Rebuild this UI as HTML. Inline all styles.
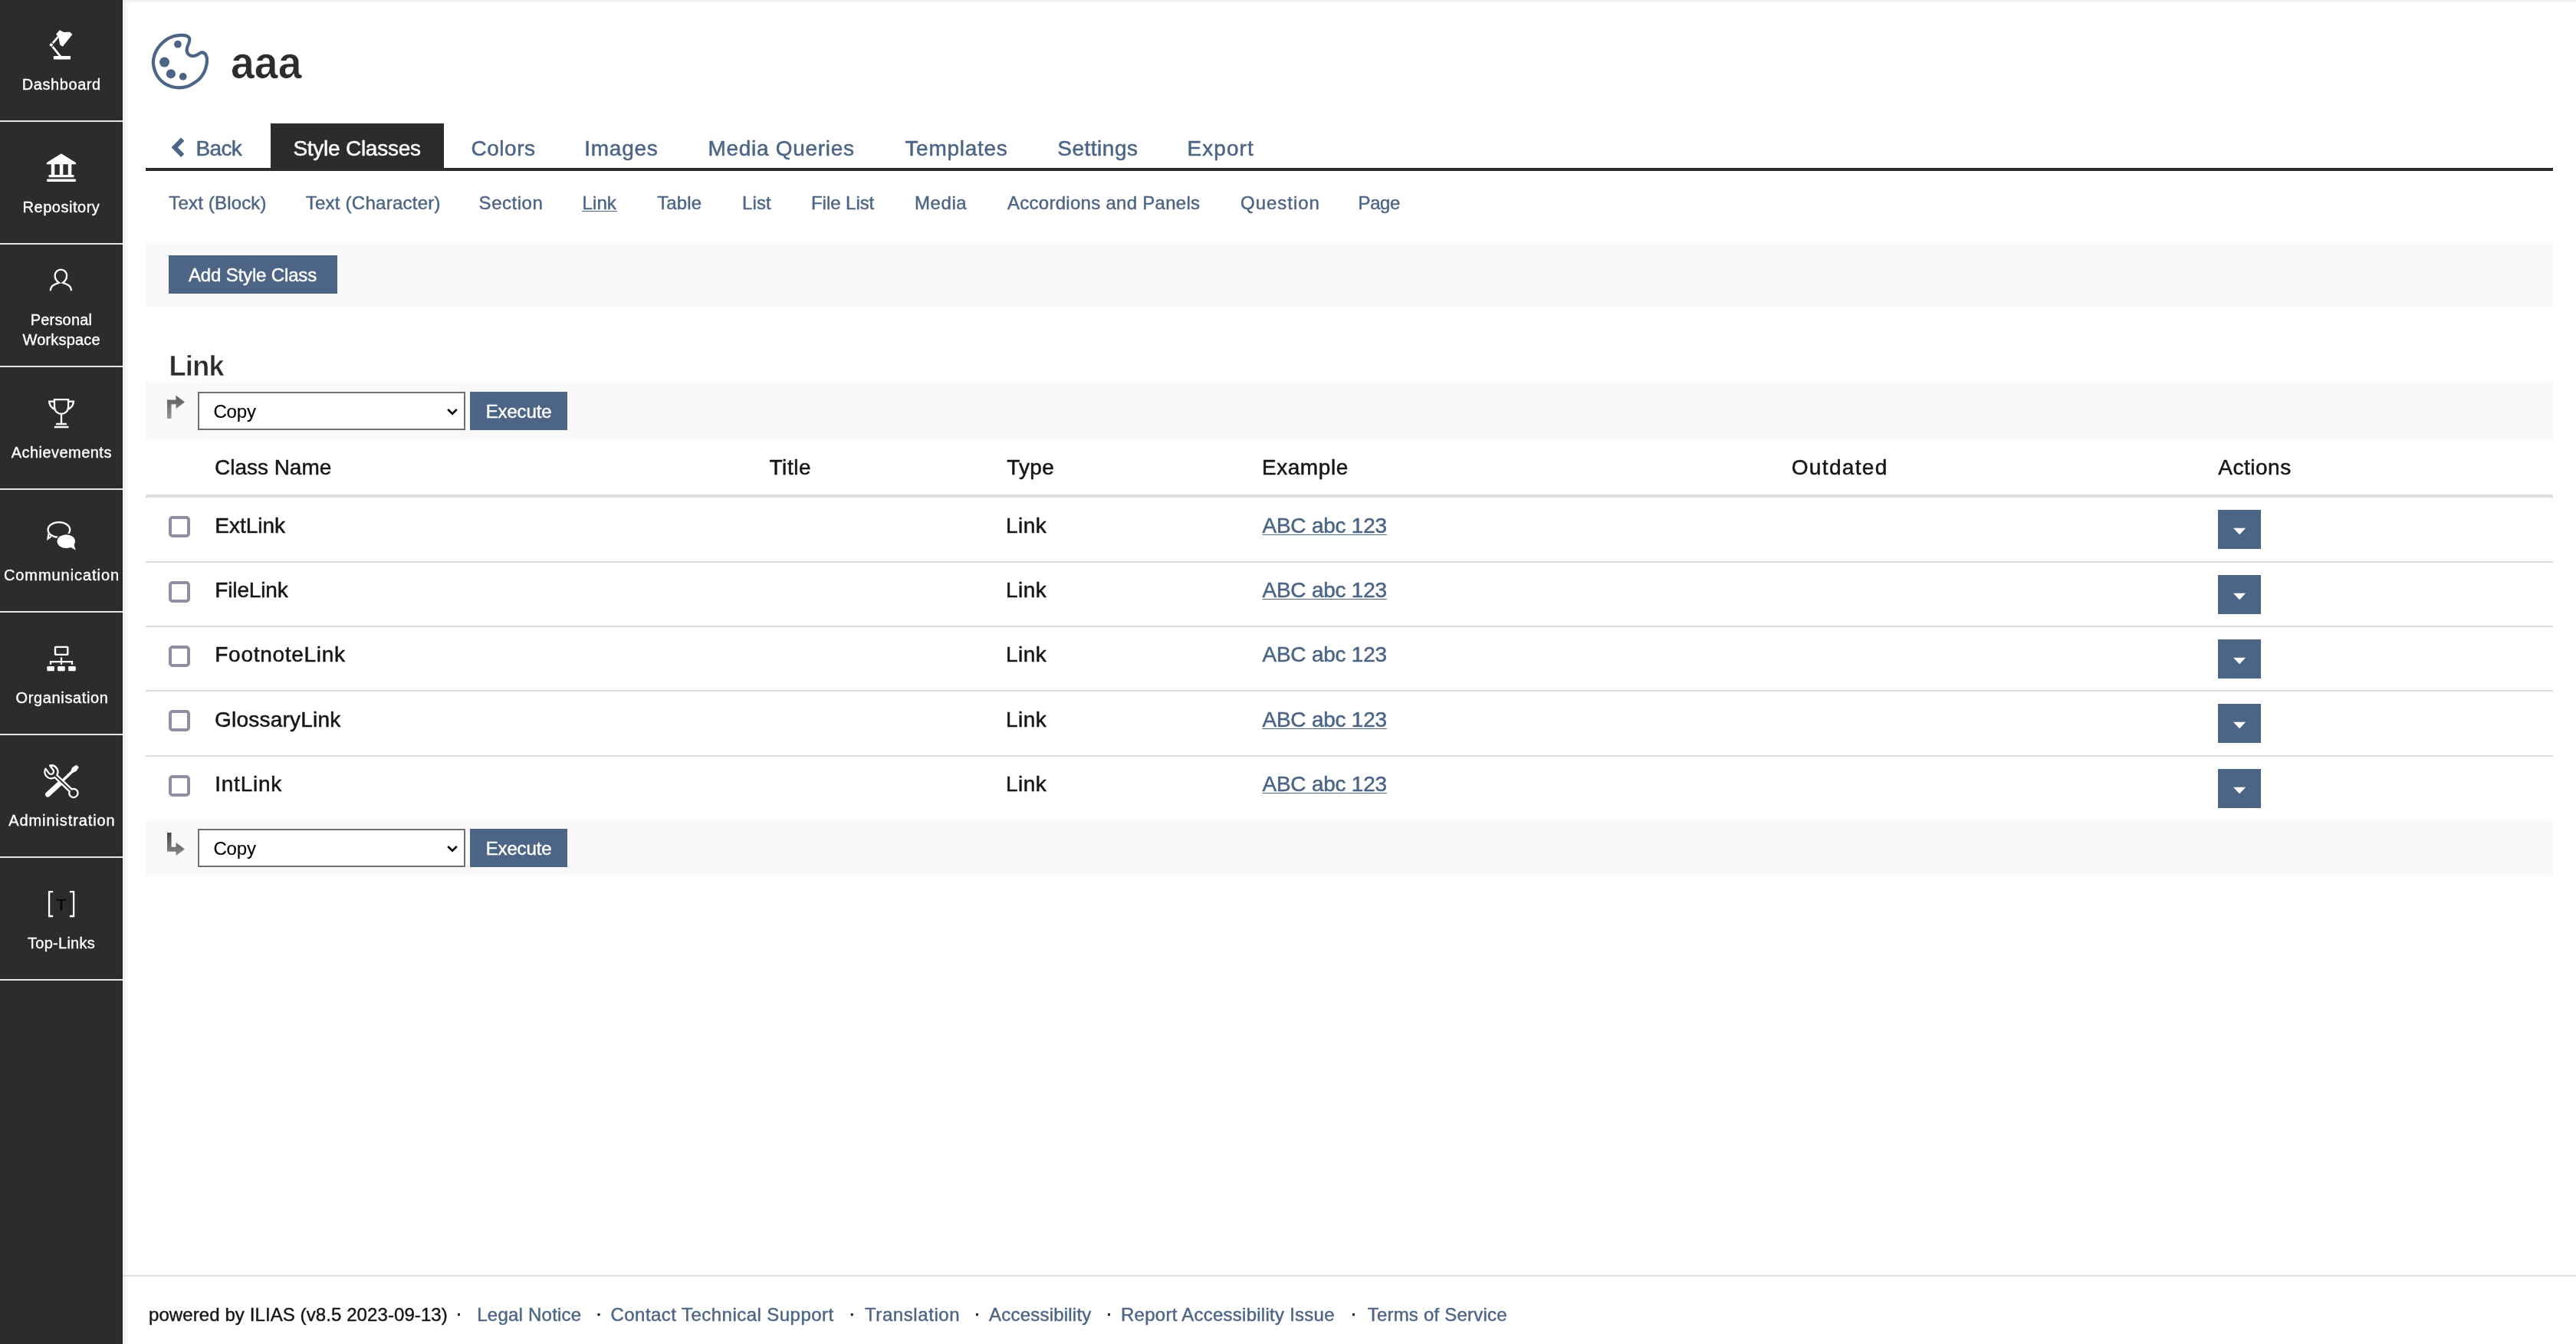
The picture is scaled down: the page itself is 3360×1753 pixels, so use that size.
<!DOCTYPE html>
<html lang="en"><head><meta charset="utf-8"><title>aaa - Style Classes</title>
<style>
html,body{margin:0;padding:0;}
body{width:3360px;height:1753px;position:relative;overflow:hidden;background:#fff;font-family:"Liberation Sans",sans-serif;}
.a{position:absolute;}
.t{margin:0;padding:0;font-weight:400;position:absolute;white-space:nowrap;line-height:1;font-family:"Liberation Sans",sans-serif;}
.ul{text-decoration:underline;text-decoration-thickness:1.3px;text-underline-offset:1.9px;}
#side{left:0;top:0;width:160px;height:1753px;background:#2c2c2c;}
.sep{left:0;width:160px;height:2px;background:#e6e6e6;}
.btn{background:#4c6586;}
.bar{left:190px;width:3140px;background:#f9f9f9;}
.hl{left:190px;width:3140px;background:#ddd;}
.cb{left:220px;width:20px;height:20px;border:4px solid #8f8fa1;border-radius:5px;background:#fff;}
.sel{left:258px;width:345px;height:46px;border:2px solid #6f6f6f;background:#fff;}
.act{left:2893px;width:56px;height:51px;background:#4c6586;}
#texts{position:absolute;left:0;top:0;width:3360px;height:1753px;will-change:transform;}

</style></head>
<body>
<div class="a" id="side"></div>
<div class="a" style="left:158px;top:0;width:2px;height:1753px;background:linear-gradient(90deg,#2a2a2a,#1e1e1e)"></div>
<div class="a" style="left:161px;top:0;width:7px;height:1753px;background:linear-gradient(90deg,#eee,#fff)"></div>
<div class="a" style="left:160px;top:0;width:3200px;height:5px;background:linear-gradient(180deg,#eee,rgba(255,255,255,0))"></div>
<div class="a sep" style="top:157px"></div>
<div class="a sep" style="top:317px"></div>
<div class="a sep" style="top:477px"></div>
<div class="a sep" style="top:637px"></div>
<div class="a sep" style="top:797px"></div>
<div class="a sep" style="top:957px"></div>
<div class="a sep" style="top:1117px"></div>
<div class="a sep" style="top:1277px"></div>

<!-- tabs -->
<div class="a" style="left:353px;top:161px;width:226px;height:60px;background:#2c2c2c"></div>
<div class="a" style="left:190px;top:219px;width:3140px;height:4px;background:#2c2c2c"></div>
<div class="a" style="left:759px;top:274.8px;width:46px;height:1.3px;background:#4c6586"></div>

<!-- toolbar -->
<div class="a bar" style="top:316px;height:84px"></div>
<div class="a btn" style="left:220px;top:333px;width:220px;height:50px"></div>

<!-- table nav -->
<div class="a bar" style="top:499px;height:74px"></div>
<div class="a sel" style="top:511px"></div>
<div class="a btn" style="left:613px;top:511px;width:127px;height:50px"></div>
<div class="a hl" style="top:645px;height:4px"></div>
<div class="a hl" style="top:732px;height:2px"></div>
<div class="a hl" style="top:816px;height:2px"></div>
<div class="a hl" style="top:900px;height:2px"></div>
<div class="a hl" style="top:985px;height:2px"></div>
<div class="a bar" style="top:1069px;height:74px"></div>
<div class="a sel" style="top:1081px"></div>
<div class="a btn" style="left:613px;top:1081px;width:127px;height:50px"></div>

<div class="a cb" style="top:673px"></div>
<div class="a cb" style="top:758px"></div>
<div class="a cb" style="top:842px"></div>
<div class="a cb" style="top:926px"></div>
<div class="a cb" style="top:1011px"></div>

<div class="a act" style="top:665px"></div>
<div class="a act" style="top:750px"></div>
<div class="a act" style="top:834px"></div>
<div class="a act" style="top:918px"></div>
<div class="a act" style="top:1003px"></div>

<!-- footer -->
<div class="a" style="left:160px;top:1663px;width:3200px;height:2px;background:#ddd"></div>

<svg class="a" style="left:0;top:0" width="3360" height="1753" viewBox="0 0 3360 1753">
<defs>
<linearGradient id="ag" x1="0" y1="0" x2="0" y2="1"><stop offset="0" stop-color="#5a5a5a"/><stop offset="1" stop-color="#989898"/></linearGradient>
<linearGradient id="ag2" x1="0" y1="0" x2="0" y2="1"><stop offset="0" stop-color="#484848"/><stop offset="1" stop-color="#8a8a8a"/></linearGradient>
</defs>
<g fill="#fff" stroke="#fff"><path d="M73.9 44.7L78.1 39.9L82.9 42.6L90.6 42.3L93.6 45L81.7 59.9L78.7 58.1L77.2 48.6Z" stroke-width="1.2" stroke-linejoin="round"/><path d="M75.9 47.8L66.8 58.6L79 73.8" fill="none" stroke-width="2.7" stroke-linejoin="round"/><circle cx="66.8" cy="58.6" r="3" fill="#2c2c2c" stroke="none"/><circle cx="66.8" cy="58.6" r="2.1" stroke="none"/><rect x="69.8" y="73" width="22.3" height="4.4" rx="1" stroke="none"/></g>
<g fill="#fff"><path d="M79.9 201L98.4 212.4V213.7H61.4V212.4Z" stroke="#fff" stroke-width="1.2" stroke-linejoin="round"/><rect x="66.8" y="214" width="4.5" height="14"/><rect x="77.8" y="214" width="4.5" height="14"/><rect x="88.8" y="214" width="4.5" height="14"/><rect x="63.5" y="227.9" width="33" height="3.3" rx="1"/><rect x="61.1" y="233.6" width="37.8" height="3.5" rx="1"/></g>
<path d="M65.8 379.2C66 373.3 69.5 371 76.8 368.8C73 366.2 71.7 362.5 71.7 359.6C71.7 355 75 351.7 79.4 351.7C83.8 351.7 87.1 355 87.1 359.6C87.1 362.5 85.8 366.2 82 368.8C89.3 371 92.8 373.3 93 379.2" fill="none" stroke="#fff" stroke-width="2.3"/>
<g fill="none" stroke="#fff" stroke-width="2.3"><path d="M71 521.2H89.1V530.5C89.1 536 85 539.9 80 539.9C75 539.9 71 536 71 530.5Z"/><path d="M71 523.6H64.2C64.4 528 66.5 531.5 71 533.6"/><path d="M89.1 523.6H95.9C95.7 528 93.6 531.5 89.1 533.6"/><path d="M80 539.9V553M73.1 553H86.9M70.8 557H89.5"/></g>
<g><ellipse cx="76.9" cy="691" rx="14.3" ry="9.9" fill="none" stroke="#fff" stroke-width="2.3"/><path d="M62.4 695.5L61.1 704.9L67.5 700.6Z" fill="#fff"/><path d="M64.3 698L64 700.4L65.6 699.4Z" fill="#2c2c2c"/><ellipse cx="86.3" cy="706.1" rx="13.3" ry="10.5" fill="#2c2c2c"/><ellipse cx="86.3" cy="706.1" rx="11.7" ry="8.9" fill="#fff"/><path d="M96.2 709.5L98.7 717.6L91.5 713.5Z" fill="#fff"/></g>
<g fill="#fff"><rect x="72" y="843.9" width="16.3" height="10" fill="none" stroke="#fff" stroke-width="2.4" rx="0.6"/><path d="M80 857.5V866.7M66 866.7V863.1H94V866.7" fill="none" stroke="#fff" stroke-width="2.3"/><rect x="61.3" y="868.9" width="9.6" height="6.3" rx="1.3"/><rect x="75.1" y="868.9" width="9.7" height="6.3" rx="1.3"/><rect x="89.1" y="868.9" width="9.7" height="6.3" rx="1.3"/></g>
<g stroke="#fff" fill="#fff"><path d="M62.3 1036.2L77.5 1022.3" stroke-width="6.6" stroke-linecap="round"/><path d="M76 1023.6L95 1005.5" stroke-width="3.6"/><path d="M94.3 1001.6L99.5 998.2L102.3 1000.6L99.4 1005.4L95.6 1007.2L93.2 1005Z" stroke-width="1" stroke-linejoin="round"/></g>
<path transform="translate(66.9 1006.8) rotate(43.6)" d="M-7.02 -4.79A8.5 8.5 0 0 1 8.24 -2.1L34.91 -2.1A5.6 5.6 0 1 1 34.91 2.1L8.24 2.1A8.5 8.5 0 0 1 -8.24 2.10L-1.20 3.34A3.5 3.5 0 0 0 0.02 -3.55Z" fill="#2c2c2c" stroke="#fff" stroke-width="2.3" stroke-linejoin="round"/>
<path d="M69.2 1163.2H64.1V1195H69.2M90.9 1163.2H96.1V1195H90.9" fill="none" stroke="#fff" stroke-width="2.3"/><text x="80" y="1187" font-family="Liberation Sans, sans-serif" font-size="21" text-anchor="middle" fill="#000">T</text>
<path d="M235.90 45.84C238.70 45.76 241.49 46.07 243.36 46.77C245.22 47.47 246.54 48.63 247.08 50.03C247.63 51.43 247.08 53.22 246.62 55.16C246.15 57.10 244.75 59.66 244.29 61.68C243.82 63.70 243.43 65.64 243.82 67.27C244.21 68.90 245.30 70.50 246.62 71.46C247.94 72.42 249.96 73.04 251.74 73.04C253.53 73.04 255.78 72.11 257.33 71.46C258.88 70.81 259.89 69.64 261.06 69.13C262.22 68.62 263.15 68.08 264.32 68.39C265.48 68.70 267.11 69.63 268.05 71.00C268.98 72.36 269.68 74.41 269.91 76.59C270.14 78.76 269.99 81.24 269.44 84.04C268.90 86.83 267.97 90.48 266.65 93.36C265.33 96.23 263.54 98.95 261.52 101.28C259.51 103.60 257.25 105.47 254.54 107.33C251.82 109.20 248.64 111.29 245.22 112.46C241.80 113.62 237.61 114.24 234.04 114.32C230.47 114.40 227.05 113.85 223.79 112.92C220.53 111.99 217.27 110.59 214.47 108.73C211.68 106.87 209.04 104.30 207.02 101.74C205.00 99.18 203.53 96.31 202.36 93.36C201.20 90.41 200.37 86.83 200.03 84.04C199.69 81.24 199.77 79.38 200.31 76.59C200.85 73.79 201.86 70.22 203.29 67.27C204.72 64.32 206.55 61.52 208.88 58.88C211.21 56.24 214.32 53.37 217.27 51.43C220.22 49.49 223.48 48.17 226.59 47.24C229.69 46.30 233.11 45.92 235.90 45.84Z" fill="none" stroke="#4c6586" stroke-width="4.2"/>
<circle cx="231.9" cy="57.7" r="4.85" fill="#4c6586"/>
<circle cx="214.5" cy="81.1" r="6.5" fill="#4c6586"/>
<circle cx="222.9" cy="96.3" r="6.1" fill="#4c6586"/>
<circle cx="238.7" cy="99.9" r="4.85" fill="#4c6586"/>
<path d="M238.2 181.6L227.7 192.3L238.2 203" fill="none" stroke="#4c6586" stroke-width="6"/>
<path d="M218 546V521.4H229.5V515.8L241 524.4L229.5 532.9V527.3H223.5V546Z" fill="url(#ag)"/>
<path d="M218 1086.1V1110.7H229.5V1116.1L241 1107.5L229.5 1098.9V1104.8H223.5V1086.1Z" fill="url(#ag2)"/>
<path d="M584.2 534L590 539.7L595.8 534" fill="none" stroke="#000" stroke-width="2.5"/>
<path d="M584.2 1104L590 1109.7L595.8 1104" fill="none" stroke="#000" stroke-width="2.5"/>
<path d="M2913 688.7H2929.2L2921.1 697.3000000000001Z" fill="#fff"/>
<path d="M2913 773.7H2929.2L2921.1 782.3000000000001Z" fill="#fff"/>
<path d="M2913 857.7H2929.2L2921.1 866.3000000000001Z" fill="#fff"/>
<path d="M2913 941.7H2929.2L2921.1 950.3000000000001Z" fill="#fff"/>
<path d="M2913 1026.7H2929.2L2921.1 1035.3Z" fill="#fff"/>
</svg>

<div id="texts">
<span class="t" style="left:28.80px;top:100.12px;font-size:20px;letter-spacing:0.573px;color:#fff;-webkit-text-stroke:0.36px #fff;">Dashboard</span>
<span class="t" style="left:29.60px;top:260.12px;font-size:20px;letter-spacing:0.512px;color:#fff;-webkit-text-stroke:0.36px #fff;">Repository</span>
<span class="t" style="left:39.70px;top:407.02px;font-size:20px;letter-spacing:0.201px;color:#fff;-webkit-text-stroke:0.36px #fff;">Personal</span>
<span class="t" style="left:29.50px;top:433.02px;font-size:20px;letter-spacing:0.169px;color:#fff;-webkit-text-stroke:0.36px #fff;">Workspace</span>
<span class="t" style="left:14.70px;top:580.12px;font-size:20px;letter-spacing:0.462px;color:#fff;-webkit-text-stroke:0.36px #fff;">Achievements</span>
<span class="t" style="left:4.90px;top:740.12px;font-size:20px;letter-spacing:0.940px;color:#fff;-webkit-text-stroke:0.36px #fff;">Communication</span>
<span class="t" style="left:20.60px;top:900.12px;font-size:20px;letter-spacing:0.630px;color:#fff;-webkit-text-stroke:0.36px #fff;">Organisation</span>
<span class="t" style="left:11.20px;top:1060.12px;font-size:20px;letter-spacing:0.908px;color:#fff;-webkit-text-stroke:0.36px #fff;">Administration</span>
<span class="t" style="left:36.10px;top:1220.12px;font-size:20px;letter-spacing:0.251px;color:#fff;-webkit-text-stroke:0.36px #fff;">Top-Links</span>
<h1 class="t" style="left:300.88px;top:51.66px;font-size:60px;letter-spacing:0.000px;color:#2c2c2c;font-weight:700;-webkit-text-stroke:0.7px #fff;transform:scaleX(0.9244);transform-origin:0 0;">aaa</h1>
<a class="t" style="left:255.40px;top:179.55px;font-size:28px;letter-spacing:-0.616px;color:#4c6586;-webkit-text-stroke:0.50px #4c6586;">Back</a>
<span class="t" style="left:382.40px;top:179.55px;font-size:28px;letter-spacing:-0.251px;color:#fff;-webkit-text-stroke:0.50px #fff;">Style Classes</span>
<a class="t" style="left:614.50px;top:179.55px;font-size:28px;letter-spacing:0.518px;color:#4c6586;-webkit-text-stroke:0.50px #4c6586;">Colors</a>
<a class="t" style="left:762.20px;top:179.55px;font-size:28px;letter-spacing:0.756px;color:#4c6586;-webkit-text-stroke:0.50px #4c6586;">Images</a>
<a class="t" style="left:923.40px;top:179.55px;font-size:28px;letter-spacing:0.710px;color:#4c6586;-webkit-text-stroke:0.50px #4c6586;">Media Queries</a>
<a class="t" style="left:1180.40px;top:179.55px;font-size:28px;letter-spacing:0.723px;color:#4c6586;-webkit-text-stroke:0.50px #4c6586;">Templates</a>
<a class="t" style="left:1379.30px;top:179.55px;font-size:28px;letter-spacing:0.504px;color:#4c6586;-webkit-text-stroke:0.50px #4c6586;">Settings</a>
<a class="t" style="left:1548.50px;top:179.55px;font-size:28px;letter-spacing:1.071px;color:#4c6586;-webkit-text-stroke:0.50px #4c6586;">Export</a>
<a class="t" style="left:220.30px;top:252.53px;font-size:24px;letter-spacing:0.167px;color:#4c6586;-webkit-text-stroke:0.43px #4c6586;">Text (Block)</a>
<a class="t" style="left:398.70px;top:252.53px;font-size:24px;letter-spacing:0.250px;color:#4c6586;-webkit-text-stroke:0.43px #4c6586;">Text (Character)</a>
<a class="t" style="left:624.60px;top:252.53px;font-size:24px;letter-spacing:0.533px;color:#4c6586;-webkit-text-stroke:0.43px #4c6586;">Section</a>
<a class="t" style="left:759.60px;top:252.53px;font-size:24px;letter-spacing:0.058px;color:#4c6586;-webkit-text-stroke:0.43px #4c6586;">Link</a>
<a class="t" style="left:857.20px;top:252.53px;font-size:24px;letter-spacing:0.118px;color:#4c6586;-webkit-text-stroke:0.43px #4c6586;">Table</a>
<a class="t" style="left:968.00px;top:252.53px;font-size:24px;letter-spacing:0.107px;color:#4c6586;-webkit-text-stroke:0.43px #4c6586;">List</a>
<a class="t" style="left:1058.00px;top:252.53px;font-size:24px;letter-spacing:-0.052px;color:#4c6586;-webkit-text-stroke:0.43px #4c6586;">File List</a>
<a class="t" style="left:1193.00px;top:252.53px;font-size:24px;letter-spacing:0.570px;color:#4c6586;-webkit-text-stroke:0.43px #4c6586;">Media</a>
<a class="t" style="left:1314.00px;top:252.53px;font-size:24px;letter-spacing:0.276px;color:#4c6586;-webkit-text-stroke:0.43px #4c6586;">Accordions and Panels</a>
<a class="t" style="left:1618.00px;top:252.53px;font-size:24px;letter-spacing:0.970px;color:#4c6586;-webkit-text-stroke:0.43px #4c6586;">Question</a>
<a class="t" style="left:1771.60px;top:252.53px;font-size:24px;letter-spacing:-0.434px;color:#4c6586;-webkit-text-stroke:0.43px #4c6586;">Page</a>
<span class="t" style="left:245.90px;top:346.73px;font-size:24px;letter-spacing:-0.150px;color:#fff;-webkit-text-stroke:0.43px #fff;">Add Style Class</span>
<h3 class="t" style="left:220.50px;top:459.78px;font-size:36px;letter-spacing:-0.627px;color:#2c2c2c;font-weight:700;-webkit-text-stroke:0.5px #fff;">Link</h3>
<span class="t" style="left:278.50px;top:524.73px;font-size:24px;letter-spacing:-0.209px;color:#000;-webkit-text-stroke:0.15px #000;">Copy</span>
<span class="t" style="left:633.70px;top:524.83px;font-size:24px;letter-spacing:-0.145px;color:#fff;-webkit-text-stroke:0.43px #fff;">Execute</span>
<span class="t" style="left:278.50px;top:1094.73px;font-size:24px;letter-spacing:-0.209px;color:#000;-webkit-text-stroke:0.15px #000;">Copy</span>
<span class="t" style="left:633.70px;top:1094.83px;font-size:24px;letter-spacing:-0.145px;color:#fff;-webkit-text-stroke:0.43px #fff;">Execute</span>
<span class="t" style="left:280.00px;top:596.25px;font-size:28px;letter-spacing:-0.023px;color:#161616;-webkit-text-stroke:0.50px #161616;">Class Name</span>
<span class="t" style="left:1003.50px;top:596.25px;font-size:28px;letter-spacing:0.554px;color:#161616;-webkit-text-stroke:0.50px #161616;">Title</span>
<span class="t" style="left:1313.30px;top:596.25px;font-size:28px;letter-spacing:0.256px;color:#161616;-webkit-text-stroke:0.50px #161616;">Type</span>
<span class="t" style="left:1645.90px;top:596.25px;font-size:28px;letter-spacing:0.572px;color:#161616;-webkit-text-stroke:0.50px #161616;">Example</span>
<span class="t" style="left:2336.70px;top:596.25px;font-size:28px;letter-spacing:1.353px;color:#161616;-webkit-text-stroke:0.50px #161616;">Outdated</span>
<span class="t" style="left:2893.30px;top:596.25px;font-size:28px;letter-spacing:0.513px;color:#161616;-webkit-text-stroke:0.50px #161616;">Actions</span>
<span class="t" style="left:280.30px;top:672.35px;font-size:28px;letter-spacing:-0.020px;color:#161616;-webkit-text-stroke:0.50px #161616;">ExtLink</span>
<span class="t" style="left:1312.00px;top:672.35px;font-size:28px;letter-spacing:0.445px;color:#161616;-webkit-text-stroke:0.50px #161616;">Link</span>
<a class="t ul" style="left:1646.50px;top:672.35px;font-size:28px;letter-spacing:-0.242px;color:#4c6586;-webkit-text-stroke:0.50px #4c6586;">ABC abc 123</a>
<span class="t" style="left:280.30px;top:756.35px;font-size:28px;letter-spacing:-0.155px;color:#161616;-webkit-text-stroke:0.50px #161616;">FileLink</span>
<span class="t" style="left:1312.00px;top:756.35px;font-size:28px;letter-spacing:0.445px;color:#161616;-webkit-text-stroke:0.50px #161616;">Link</span>
<a class="t ul" style="left:1646.50px;top:756.35px;font-size:28px;letter-spacing:-0.242px;color:#4c6586;-webkit-text-stroke:0.50px #4c6586;">ABC abc 123</a>
<span class="t" style="left:280.30px;top:840.35px;font-size:28px;letter-spacing:0.710px;color:#161616;-webkit-text-stroke:0.50px #161616;">FootnoteLink</span>
<span class="t" style="left:1312.00px;top:840.35px;font-size:28px;letter-spacing:0.445px;color:#161616;-webkit-text-stroke:0.50px #161616;">Link</span>
<a class="t" style="left:1646.50px;top:840.35px;font-size:28px;letter-spacing:-0.242px;color:#4c6586;-webkit-text-stroke:0.50px #4c6586;">ABC abc 123</a>
<span class="t" style="left:280.10px;top:924.55px;font-size:28px;letter-spacing:0.206px;color:#161616;-webkit-text-stroke:0.50px #161616;">GlossaryLink</span>
<span class="t" style="left:1312.00px;top:924.55px;font-size:28px;letter-spacing:0.445px;color:#161616;-webkit-text-stroke:0.50px #161616;">Link</span>
<a class="t ul" style="left:1646.50px;top:924.55px;font-size:28px;letter-spacing:-0.242px;color:#4c6586;-webkit-text-stroke:0.50px #4c6586;">ABC abc 123</a>
<span class="t" style="left:280.30px;top:1009.35px;font-size:28px;letter-spacing:0.734px;color:#161616;-webkit-text-stroke:0.50px #161616;">IntLink</span>
<span class="t" style="left:1312.00px;top:1009.35px;font-size:28px;letter-spacing:0.445px;color:#161616;-webkit-text-stroke:0.50px #161616;">Link</span>
<a class="t ul" style="left:1646.50px;top:1009.35px;font-size:28px;letter-spacing:-0.242px;color:#4c6586;-webkit-text-stroke:0.50px #4c6586;">ABC abc 123</a>
<span class="t" style="left:194.00px;top:1702.73px;font-size:24px;letter-spacing:0.088px;color:#161616;-webkit-text-stroke:0.43px #161616;">powered by ILIAS (v8.5 2023-09-13)</span>
<a class="t" style="left:622.30px;top:1702.73px;font-size:24px;letter-spacing:0.221px;color:#4c6586;-webkit-text-stroke:0.43px #4c6586;">Legal Notice</a>
<a class="t" style="left:796.50px;top:1702.73px;font-size:24px;letter-spacing:0.454px;color:#4c6586;-webkit-text-stroke:0.43px #4c6586;">Contact Technical Support</a>
<a class="t" style="left:1128.00px;top:1702.73px;font-size:24px;letter-spacing:0.582px;color:#4c6586;-webkit-text-stroke:0.43px #4c6586;">Translation</a>
<a class="t" style="left:1290.10px;top:1702.73px;font-size:24px;letter-spacing:0.208px;color:#4c6586;-webkit-text-stroke:0.43px #4c6586;">Accessibility</a>
<a class="t" style="left:1462.00px;top:1702.73px;font-size:24px;letter-spacing:0.257px;color:#4c6586;-webkit-text-stroke:0.43px #4c6586;">Report Accessibility Issue</a>
<a class="t" style="left:1783.70px;top:1702.73px;font-size:24px;letter-spacing:0.209px;color:#4c6586;-webkit-text-stroke:0.43px #4c6586;">Terms of Service</a>
<span class="t" style="left:594.4px;top:1700.68px;font-size:24px;color:#161616;-webkit-text-stroke:0.6px #161616">·</span><span class="t" style="left:777.1px;top:1700.68px;font-size:24px;color:#161616;-webkit-text-stroke:0.6px #161616">·</span><span class="t" style="left:1107.2px;top:1700.68px;font-size:24px;color:#161616;-webkit-text-stroke:0.6px #161616">·</span><span class="t" style="left:1270.5px;top:1700.68px;font-size:24px;color:#161616;-webkit-text-stroke:0.6px #161616">·</span><span class="t" style="left:1442.6px;top:1700.68px;font-size:24px;color:#161616;-webkit-text-stroke:0.6px #161616">·</span><span class="t" style="left:1761.6px;top:1700.68px;font-size:24px;color:#161616;-webkit-text-stroke:0.6px #161616">·</span>
</div>
</body></html>
